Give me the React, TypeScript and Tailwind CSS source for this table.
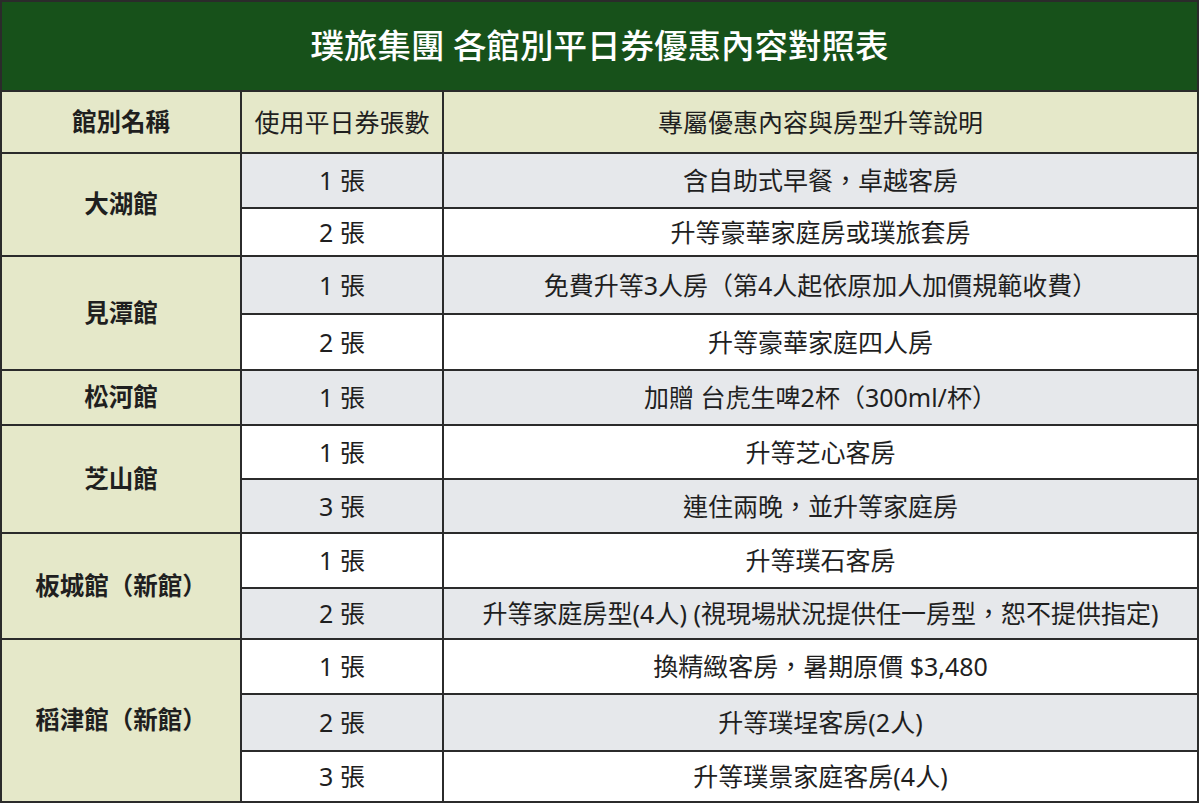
type Offer = { count: string; text: string; h: number };

interface Branch {
  name: string;
  offers: Offer[];
}

const branches: Branch[] = [
  {
    name: "大湖館",
    offers: [
      { count: "1 張", text: "含自助式早餐，卓越客房", h: 55 },
      { count: "2 張", text: "升等豪華家庭房或璞旅套房", h: 48 },
    ],
  },
  {
    name: "見潭館",
    offers: [
      { count: "1 張", text: "免費升等3人房（第4人起依原加人加價規範收費）", h: 58 },
      { count: "2 張", text: "升等豪華家庭四人房", h: 56 },
    ],
  },
  {
    name: "松河館",
    offers: [{ count: "1 張", text: "加贈 台虎生啤2杯（300ml/杯）", h: 55 }],
  },
  {
    name: "芝山館",
    offers: [
      { count: "1 張", text: "升等芝心客房", h: 54 },
      { count: "3 張", text: "連住兩晚，並升等家庭房", h: 54 },
    ],
  },
  {
    name: "板城館（新館）",
    offers: [
      { count: "1 張", text: "升等璞石客房", h: 55 },
      {
        count: "2 張",
        text: "升等家庭房型(4人) (視現場狀況提供任一房型，恕不提供指定)",
        h: 51,
      },
    ],
  },
  {
    name: "稻津館（新館）",
    offers: [
      { count: "1 張", text: "換精緻客房，暑期原價 $3,480", h: 55 },
      { count: "2 張", text: "升等璞埕客房(2人)", h: 57 },
      { count: "3 張", text: "升等璞景家庭客房(4人)", h: 51 },
    ],
  },
];

const cell = "border-2 border-[#2b2b2b] text-center align-middle p-0";

export default function App() {
  let rowIndex = 0;

  return (
    <div
      className="w-[1200px] h-[808px] bg-white text-[#1f1f1f]"
      style={{ fontFamily: '"Noto Sans", "Noto Sans CJK TC", sans-serif' }}
    >
      <table className="w-[1199px] border-collapse table-fixed text-[25px] leading-none">
        <colgroup>
          <col className="w-[240px]" />
          <col className="w-[202px]" />
          <col />
        </colgroup>
        <tbody>
          <tr className="h-[90px]">
            <td
              colSpan={3}
              className={`${cell} bg-[#17511a] text-white text-[33.5px] font-medium`}
            >
              璞旅集團 各館別平日券優惠內容對照表
            </td>
          </tr>
          <tr className="h-[62px] bg-[#e5e8c9]">
            <td className={`${cell} font-bold text-[24.5px]`}>館別名稱</td>
            <td className={cell}>使用平日券張數</td>
            <td className={cell}>專屬優惠內容與房型升等說明</td>
          </tr>
          {branches.map((branch) =>
            branch.offers.map((offer, i) => {
              const shaded = rowIndex++ % 2 === 0;
              const bg = shaded ? "bg-[#e6e8eb]" : "bg-white";
              return (
                <tr key={branch.name + i} style={{ height: offer.h }}>
                  {i === 0 && (
                    <td
                      rowSpan={branch.offers.length}
                      className={`${cell} bg-[#e5e8c9] font-bold text-[24.5px]`}
                    >
                      {branch.name}
                    </td>
                  )}
                  <td className={`${cell} ${bg}`}>{offer.count}</td>
                  <td className={`${cell} ${bg}`}>{offer.text}</td>
                </tr>
              );
            })
          )}
        </tbody>
      </table>
    </div>
  );
}
